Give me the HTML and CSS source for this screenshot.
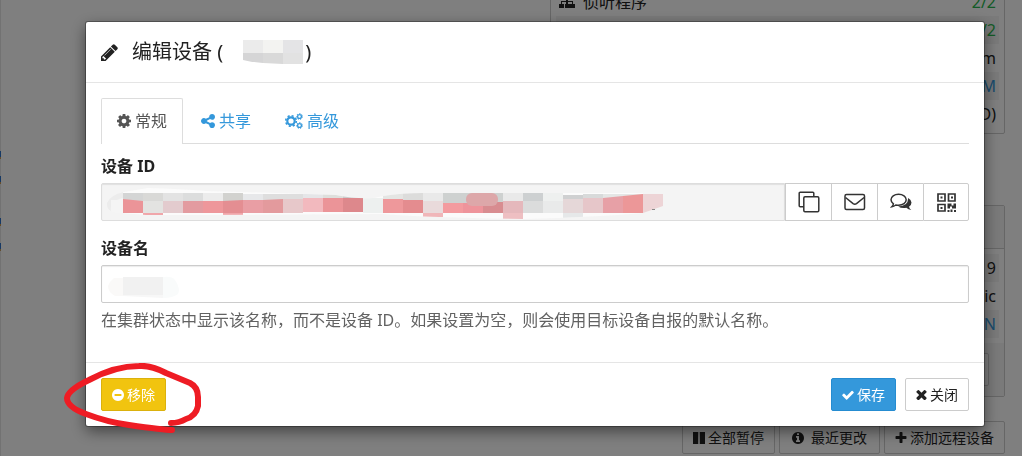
FILE: index.html
```html
<!DOCTYPE html>
<html lang="zh-CN">
<head>
  <meta charset="UTF-8">
  <meta name="viewport" content="width=device-width, initial-scale=1.0">
  <title>编辑设备</title>
  <link rel="stylesheet" href="styles.css">
</head>
<body>

<svg class="defs" aria-hidden="true">
  <symbol id="cog" viewBox="0 0 1792 1792"><path d="M1152 896q0-106-75-181t-181-75-181 75-75 181 75 181 181 75 181-75 75-181zm512-109v222q0 12-8 23t-20 13l-185 28q-19 54-39 91 35 50 107 138 10 12 10 25t-9 23q-27 37-99 108t-94 71q-12 0-26-9l-138-108q-44 23-91 38-16 136-29 186-7 28-36 28h-222q-14 0-24.5-8.5t-11.5-21.5l-28-184q-49-16-90-37l-141 107q-10 9-25 9-14 0-25-11-126-114-165-168-7-10-7-23 0-12 8-23 15-21 51-66.5t54-70.5q-27-50-41-99l-183-27q-13-2-21-12.5t-8-23.5v-222q0-12 8-23t19-13l186-28q14-46 39-92-40-57-107-138-10-12-10-24 0-10 9-23 26-36 98.5-107.5t94.5-71.5q13 0 26 10l138 107q44-23 91-38 16-136 29-186 7-28 36-28h222q14 0 24.5 8.5t11.5 21.5l28 184q49 16 90 37l142-107q9-9 24-9 13 0 25 10 129 119 165 170 7 8 7 22 0 12-8 23-15 21-51 66.5t-54 70.5q26 50 41 98l183 28q13 2 21 12.5t8 23.5z"/></symbol>
</svg>

<main class="page">
  <div class="folders">
    <svg width="1" height="100" viewBox="0 0 1 100" shape-rendering="crispEdges"><path fill="#2f73c8" d="M0 0h1v6H0zM0 25h1v6H0zM0 67h1v6H0zM0 92h1v6H0z"/><path fill="#c79a5a" d="M0 6h1v2H0zM0 31h1v2H0zM0 73h1v2H0zM0 98h1v2H0z"/></svg>
  </div>
  <div class="devices">
    <section class="panel">
      <div class="panel-body">
        <div class="row">
          <span><svg class="icon" viewBox="0 0 16 16"><path d="M6 1h4v4H9v2h5v3h2v4h-5v-4h2V8H9v2h2v4H6v-4h1V8H3v2h2v4H0v-4h2V7h5V5H6z"/></svg>侦听程序</span>
          <span class="good">2/2</span>
        </div>
        <div class="row">
          <span><svg class="icon" viewBox="0 0 16 16"><path d="M8 0l5 5v7H3V5z"/></svg></span>
          <span class="good">2/2</span>
        </div>
        <div class="row"><span></span><span>m</span></div>
        <div class="row"><span></span><a href="#">M</a></div>
        <div class="row"><span></span><span>D)</span></div>
      </div>
    </section>

    <section class="panel remote">
      <div class="panel-heading"></div>
      <div class="panel-body">
        <div class="row"><span></span><span>19</span></div>
        <div class="row"><span></span><span>ic</span></div>
        <div class="row"><span></span><a href="#">TN</a></div>
      </div>
      <div class="panel-footer"><button class="btn" type="button" aria-label="详情"></button></div>
    </section>

    <div class="actions">
      <button class="btn" type="button"><svg class="icon" viewBox="128 128 1536 1536"><path d="M128 128h672v1536H128zM992 128h672v1536H992z"/></svg>全部暂停</button>
      <button class="btn spaced" type="button"><svg class="icon" viewBox="128 128 1536 1536"><path d="M1152 1376v-160q0-14-9-23t-23-9h-96v-512q0-14-9-23t-23-9h-320q-14 0-23 9t-9 23v160q0 14 9 23t23 9h96v320h-96q-14 0-23 9t-9 23v160q0 14 9 23t23 9h448q14 0 23-9t9-23zm-128-896v-160q0-14-9-23t-23-9h-192q-14 0-23 9t-9 23v160q0 14 9 23t23 9h192q14 0 23-9t9-23zm640 416q0 209-103 385.5t-279.5 279.5-385.5 103-385.5-103-279.5-279.5-103-385.5 103-385.5 279.5-279.5 385.5-103 385.5 103 279.5 279.5 103 385.5z"/></svg>最近更改</button>
      <button class="btn" type="button"><svg class="icon" viewBox="128 128 1536 1536"><path d="M1600 736v192q0 40-28 68t-68 28h-416v416q0 40-28 68t-68 28h-192q-40 0-68-28t-28-68v-416h-416q-40 0-68-28t-28-68v-192q0-40 28-68t68-28h416v-416q0-40 28-68t68-28h192q40 0 68 28t28 68v416h416q40 0 68 28t28 68z"/></svg>添加远程设备</button>
    </div>
  </div>
</main>

<div class="modal">
  <form class="modal-content" role="dialog" aria-labelledby="title">
    <div class="modal-header">
      <svg class="icon" viewBox="128 128 1536 1536"><path d="M491 1536l91-91-235-235-91 91v107h128v128h107zm523-928q0-22-22-22-10 0-17 7l-542 542q-7 7-7 17 0 22 22 22 10 0 17-7l542-542q7-7 7-17zm-54-192l416 416-832 832h-416v-416zm683 96q0 53-37 90l-166 166-416-416 166-165q36-38 90-38 53 0 91 38l235 234q37 39 37 91z"/></svg>
      <h4 id="title">编辑设备 (
        <svg class="title-mask" viewBox="0 0 60 24">
          <path fill="#ebebeb" d="M0 0h20v13H0z"/><path fill="#f3f3f1" d="M20 0h20v13H20z"/><path fill="#e4e4e6" d="M40 0h20v13H40z"/>
          <path fill="#d5d5d6" d="M0 13h20v10Q7 22 0 20z"/><path fill="#d9d9d9" d="M20 13h20v11l-20-1z"/><path fill="#e2e2e2" d="M40 13h20v11H40z"/>
        </svg>)</h4>
    </div>

    <div class="modal-body">
      <ul class="tabs">
        <li class="active"><a href="#general"><svg class="icon" viewBox="128 128 1536 1536"><use href="#cog" width="1792" height="1792"/></svg>常规</a></li>
        <li><a href="#sharing"><svg class="icon" viewBox="128 128 1536 1536"><path d="M1344 1024q133 0 226.5 93.5t93.5 226.5-93.5 226.5-226.5 93.5-226.5-93.5-93.5-226.5q0-12 2-34l-360-180q-92 86-218 86-133 0-226.5-93.5t-93.5-226.5 93.5-226.5 226.5-93.5q126 0 218 86l360-180q-2-22-2-34 0-133 93.5-226.5t226.5-93.5 226.5 93.5 93.5 226.5-93.5 226.5-226.5 93.5q-126 0-218-86l-360 180q2 22 2 34t-2 34l360 180q92-86 218-86z"/></svg>共享</a></li>
        <li><a href="#advanced"><svg class="icon cogs" viewBox="0 0 18 16">
          <g fill="none" stroke="currentColor">
            <circle cx="6" cy="8" r="3.7" stroke-width="2.2"/><circle cx="6" cy="8" r="5.3" stroke-width="1.6" stroke-dasharray="2.1 2.06"/>
            <circle cx="14.5" cy="3.5" r="1.9" stroke-width="1.3"/><circle cx="14.5" cy="3.5" r="2.9" stroke-width="1" stroke-dasharray="1.3 1.3"/>
            <circle cx="14.5" cy="12.5" r="1.9" stroke-width="1.3"/><circle cx="14.5" cy="12.5" r="2.9" stroke-width="1" stroke-dasharray="1.3 1.3"/>
          </g></svg>高级</a></li>
      </ul>

      <div class="form-group">
        <label for="deviceID">设备 ID</label>
        <div class="input-group">
          <div class="field">
            <input id="deviceID" type="text" readonly>
            <svg class="mask" width="560" height="34" viewBox="0 0 560 34">
              <clipPath id="blob"><path d="M1 17Q4 9 18 6L42 2Q75 3 100 5L170 7 230 9Q260 15 277 10 295 7 317 7H557V20L537 27Q490 31 417 33 330 32 277 28L80 29 40 29 15 27Q0 27 1 17z"/></clipPath>
              <g clip-path="url(#blob)">
                <path fill="#fbfbfb" d="M17 0h520v34H17z"/>
                <path fill="#ececec" d="M0 5h17v7Q3 15 5 25H0z"/>
                <path fill="#f5f5f5" d="M5 14h12v14H5z"/>
                <path fill="#d4d5d5" d="M17 7h20v8H17z"/><path fill="#d9d9d7" d="M37 7h20v8H37z"/><path fill="#e3e3e3" d="M57 7h20v8H57z"/><path fill="#dcdddd" d="M77 7h20v8H77z"/><path fill="#ececec" d="M97 7h20v8H97z"/><path fill="#d2d2cf" d="M117 7h20v8h-20z"/><path fill="#e7e8ea" d="M137 8h20v7h-20z"/><path fill="#dedede" d="M157 8h40v7h-40z"/><path fill="#e5e6e8" d="M197 8h20v5h-20z"/><path fill="#dedfdc" d="M217 8h20v5h-20z"/><path fill="#ccc" d="M237 8h20v5h-20z"/>
                <path fill="#edf0ef" d="M257 12h20v15h-20z"/><path fill="#e4e5e3" d="M277 7h20v6h-20z"/><path fill="#dcdcdb" d="M297 7h20v8h-20z"/><path fill="#e9e9e9" d="M317 7h20v8h-20z"/><path fill="#ced1d0" d="M337 7h60v10h-60z"/><path fill="#e9e9e9" d="M397 7h20v8h-20z"/><path fill="#cdd0d1" d="M417 7h20v8h-20z"/><path fill="#eef0ef" d="M437 7h20v8h-20z"/><path fill="#cfd0d1" d="M457 9h20v4h-20z"/><path fill="#d8dada" d="M477 8h20v5h-20z"/><path fill="#e4e6e5" d="M497 8h40v4h-40z"/>
                <path fill="#eb9498" d="M17 13l20 2v12H17z"/><path fill="#e3e3e1" d="M37 15h20v12H37z"/><path fill="#e3cbce" d="M57 15h20v12H57z"/><path fill="#e39ba0" d="M77 15h20v12H77z"/><path fill="#ee979b" d="M97 15h20v12H97z"/><path fill="#e48e92" d="M117 15l20-1v14h-20z"/><path fill="#e99ea4" d="M137 14h20v13h-20z"/><path fill="#e39a9d" d="M157 14l20-1v14h-20z"/><path fill="#e7c8ca" d="M177 13h20v14h-20z"/><path fill="#f2b9be" d="M197 12h20v14h-20z"/><path fill="#eb9498" d="M217 12h20v14h-20z"/><path fill="#dd888c" d="M237 12h20v14h-20z"/>
                <path fill="#ee989b" d="M277 13h20v14h-20z"/><path fill="#e48c8f" d="M297 14h20v13h-20z"/><path fill="#e9dadb" d="M317 15h20v12h-20z"/><path fill="#f39b9f" d="M337 17h20v10h-20z"/><path fill="#ee949b" d="M357 17h20v10h-20z"/><path fill="#d88c90" d="M377 16h20v11h-20z"/><path fill="#e5b8bc" d="M397 15h20v12h-20z"/><path fill="#dbdcdc" d="M417 15h20v12h-20z"/><path fill="#e9eaea" d="M437 15h20v12h-20z"/><path fill="#e5d7d8" d="M457 13h20v14h-20z"/><path fill="#e6c6c9" d="M477 12h20v15h-20z"/><path fill="#e7a0a6" d="M497 12l20-2v17h-20z"/><path fill="#ec9798" d="M517 10l20-2v19h-20z"/><path fill="#edd4d6" d="M537 8h20v20h-20z"/>
                <path fill="#f0a6aa" d="M37 27h20v2H37zM117 27h20v2h-20z"/><path fill="#f0b6b9" d="M317 27h20v4h-20z"/><path fill="#eebfc2" d="M397 27h20v6h-20z"/><path fill="#e6e8e9" d="M457 27h20v6h-20z"/>
                <rect x="360" y="7" width="32" height="13" rx="6" fill="#dda7a9"/>
              </g>
              <path fill="#888" d="M546 23h3v1h-3z"/>
            </svg>
          </div>
          <button class="addon" type="button" aria-label="复制"><svg width="22" height="22" viewBox="0 0 22 22"><g fill="none" stroke="currentColor" stroke-width="1.5"><rect x="5.8" y="5.8" width="15" height="15" rx="1.2"/><path d="M5.8 15.8H2.2a1 1 0 0 1-1-1V2.2a1 1 0 0 1 1-1h12.6a1 1 0 0 1 1 1v3.6"/></g></svg></button>
          <button class="addon" type="button" aria-label="邮件"><svg width="22" height="18" viewBox="0 0 22 18"><g fill="none" stroke="currentColor" stroke-width="1.5"><rect x="1" y="1.5" width="19.5" height="15" rx="1.5"/><path d="M1.5 4.5l7.6 6.2q1.7 1.2 3.4 0l7.6-6.2"/></g></svg></button>
          <button class="addon" type="button" aria-label="短信"><svg width="22" height="18" viewBox="0 0 22 18"><path fill="none" stroke="currentColor" stroke-width="1.5" d="M8.6 1.3c4.3 0 7.6 2.4 7.6 5.5s-3.3 5.5-7.6 5.5q-1.5 0-2.8-.3-2 1.6-4 1.8 1.3-1.2 1.6-3Q1 9 1 6.8C1 3.7 4.3 1.3 8.6 1.3z"/><path fill="currentColor" d="M18.2 5Q21.5 7 21.5 9.6t-2.5 4.1q.4 1.9 2.3 3.2-3-.2-5-2.2-4.8.8-8.2-1.3Q18 13.500 18.200 5z"/></svg></button>
          <button class="addon last" type="button" aria-label="二维码"><svg width="19" height="19" viewBox="0 0 19 19"><g fill="none" stroke="currentColor" stroke-width="1.7"><path d="M1 1h7v7H1zM11.500 1h6.500v7h-6.500zM1 11.500h7v6.500H1z"/></g><path fill="currentColor" d="M3.500 3.500h2v2h-2zM14 3.500h2v2h-2zM3.500 14h2v2h-2zM10.500 10.500h4v2h2v-2H19v5h-4v-2h-2v2h-2.500zM10.500 17h2v2h-2zM13.500 16.500h2V19h-2zM17 17h2v2h-2z"/></svg></button>
        </div>
      </div>

      <div class="form-group">
        <label for="name">设备名</label>
        <div class="field">
          <input id="name" type="text">
          <svg class="mask" width="76" height="34" viewBox="0 0 76 34"><path fill="#faf9f8" d="M17 10v18H9Q2 24 2 18q2-5 6-8z"/><path fill="#f1f1f1" d="M17 9h40v18H17z"/><path fill="#f7f7f7" d="M17 27h40v3L17 28z"/><path fill="#f9fbfb" d="M57 9q9-1 12 3 6 9 3 14-5 4-15 4z"/></svg>
        </div>
        <p class="help">在集群状态中显示该名称，而不是设备 ID。如果设置为空，则会使用目标设备自报的默认名称。</p>
      </div>
    </div>

    <div class="modal-footer">
      <button class="btn warning" type="button"><svg class="icon" viewBox="128 128 1536 1536"><path d="M1344 960v-128q0-26-19-45t-45-19h-768q-26 0-45 19t-19 45v128q0 26 19 45t45 19h768q26 0 45-19t19-45zm320-64q0 209-103 385.5t-279.5 279.5-385.5 103-385.5-103-279.5-279.5-103-385.5 103-385.5 279.5-279.5 385.5-103 385.5 103 279.5 279.5 103 385.5z"/></svg>移除</button>
      <div class="footer-right">
        <button class="btn primary" type="submit"><svg class="icon" viewBox="96 96 1600 1600"><path d="M1671 566q0 40-28 68l-724 724-136 136q-28 28-68 28t-68-28l-136-136-362-362q-28-28-28-68t28-68l136-136q28-28 68-28t68 28l294 295 656-657q28-28 68-28t68 28l136 136q28 28 28 68z"/></svg>保存</button>
        <button class="btn" type="button"><svg class="icon narrow" viewBox="256 256 1280 1280"><path d="M1490 1322q0 40-28 68l-136 136q-28 28-68 28t-68-28l-294-294-294 294q-28 28-68 28t-68-28l-136-136q-28-28-28-68t28-68l294-294-294-294q-28-28-28-68t28-68l136-136q28-28 68-28t68 28l294 294 294-294q28-28 68-28t68 28l136 136q28 28 28 68t-28 68l-294 294 294 294q28 28 28 68z"/></svg>关闭</button>
      </div>
      <svg class="marker" width="140" height="72" viewBox="0 0 140 72"><path d="M110 67Q102 67 67 62 45 59 24 51 5 44 5 35 6 27 27 17 53 3 77 3 89 2 104 10L128 20Q136 24 136 34V43Q134 53 124 56 117 60 109 60" fill="none" stroke="#ee1c24" stroke-width="6" stroke-linecap="round" stroke-linejoin="round"/></svg>
    </div>
  </form>
</div>

</body>
</html>
```
FILE: styles.css
```css
* {
  box-sizing: border-box;
}
body {
  margin: 0;
  background: #fff;
  color: #222;
  font-family: "Noto Sans", "Noto Sans CJK SC", sans-serif;
  font-size: 16px;
  line-height: 24px;
  overflow: hidden;
}
a {
  color: #3498db;
  text-decoration: none;
}
button, input {
  font: inherit;
  color: inherit;
}
svg {
  flex: none;
}
.defs {
  display: none;
}
.icon {
  width: 14px;
  height: 14px;
  fill: currentColor;
}

/* page behind the dialog */
.page {
  display: grid;
  grid-template-columns: 1fr 455px;
  height: 100vh;
  padding-right: 17px;
  overflow: hidden;
}
.folders {
  padding-top: 151px;
  background: linear-gradient(to right, #e4e4e4 1px, transparent 1px);
}
.folders svg {
  display: block;
}
.panel {
  border: 1px solid #ccc;
  border-radius: 2px;
}
.panel:first-child {
  margin-top: -20px;
}
.panel-body {
  padding: 7px 5px 5px;
}
.row {
  display: flex;
  justify-content: space-between;
  height: 28px;
  padding: 2px 3px;
}
.row:nth-child(even) {
  background: #f4f4f4;
}
.row .icon {
  width: 16px;
  height: 16px;
  margin-right: 8px;
  vertical-align: -2px;
}
.row .good {
  color: #29b74e;
}
.remote {
  margin-top: 71px;
}
.remote .panel-heading {
  height: 43px;
  background: #f5f5f5;
  border-bottom: 1px solid #ccc;
}
.remote .row:nth-child(odd) {
  background: #f4f4f4;
}
.remote .row:nth-child(even) {
  background: none;
}
.remote .panel-body {
  padding: 5px;
}
.panel-footer {
  display: flex;
  justify-content: flex-end;
  padding: 10px 15px;
  background: #f5f5f5;
}
.panel-footer .btn {
  width: 80px;
  height: 33px;
}
.actions {
  display: flex;
  justify-content: flex-end;
  gap: 4px;
  margin-top: 24px;
}
.btn {
  display: flex;
  align-items: center;
  gap: 3px;
  padding: 5px 10px;
  border: 1px solid #ccc;
  border-radius: 2px;
  background: #fff;
  font-size: 14px;
  line-height: 21px;
  white-space: nowrap;
  cursor: pointer;
}
.btn .icon {
  width: 12px;
  height: 12px;
}
.btn.spaced {
  gap: 7px;
  padding: 5px 12px;
}
.btn .narrow {
  width: 11px;
  height: 11px;
}

/* dialog */
.modal {
  position: fixed;
  inset: 0;
  padding: 22px 38px 0 86px;
  background: rgba(0, 0, 0, 0.5);
}
.modal-content {
  background: #fff;
  border-radius: 2px;
  box-shadow: 0 0 0 1px rgba(0, 0, 0, 0.3), 0 5px 15px rgba(0, 0, 0, 0.5);
}
.modal-header {
  display: flex;
  align-items: center;
  gap: 14px;
  height: 61px;
  padding: 0 15px;
  border-bottom: 1px solid #e5e5e5;
}
.modal-header .icon {
  width: 17px;
  height: 17px;
}
.modal-header h4 {
  display: flex;
  align-items: center;
  margin: 0;
  font-size: 20px;
  font-weight: normal;
}
.title-mask {
  width: 60px;
  height: 24px;
  margin: 0 2px 0 20px;
}
.modal-body {
  padding: 15px;
}
.tabs {
  display: flex;
  gap: 2px;
  margin: 0 0 10px;
  padding: 0;
  list-style: none;
  border-bottom: 1px solid #ddd;
}
.tabs a {
  display: flex;
  align-items: center;
  gap: 4px;
  padding: 10px 15px;
  border: 1px solid transparent;
  border-bottom: 0;
  border-radius: 2px 2px 0 0;
}
.tabs .active a {
  margin-bottom: -1px;
  padding-bottom: 11px;
  border-color: #ddd;
  background: #fff;
  color: #555;
}
.tabs .cogs {
  width: 18px;
  height: 16px;
}
.form-group {
  margin-bottom: 15px;
}
label {
  display: block;
  margin-bottom: 5px;
  font-weight: bold;
}
.input-group {
  display: flex;
}
.field {
  position: relative;
  flex: 1;
}
.field input {
  display: block;
  width: 100%;
  height: 38px;
  padding: 6px 12px;
  border: 1px solid #ccc;
  border-radius: 2px;
  background: #fff;
  box-shadow: inset 0 1px 1px rgba(0, 0, 0, 0.08);
}
.field input[readonly] {
  border-color: #ddd;
  border-radius: 2px 0 0 2px;
  background: #f4f4f4;
}
.mask {
  position: absolute;
  left: 5px;
  top: 3px;
}
.addon {
  display: flex;
  align-items: center;
  justify-content: center;
  width: 46px;
  height: 38px;
  padding: 0;
  border: 1px solid #ccc;
  border-right: 0;
  background: #fff;
  color: #333;
}
.addon.last {
  border-right: 1px solid #ccc;
  border-radius: 0 2px 2px 0;
}
.help {
  margin: 5px 0 0;
  color: #626262;
}
.modal-footer {
  position: relative;
  display: flex;
  justify-content: space-between;
  padding: 15px;
  border-top: 1px solid #e5e5e5;
}
.footer-right {
  display: flex;
  gap: 9px;
}
.btn.warning {
  border-color: #dbb10d;
  background: #f1c40f;
  color: #fff;
}
.btn.primary {
  border-color: #258cd1;
  background: #3498db;
  color: #fff;
}

/* red pen ring round the remove button */
.marker {
  position: absolute;
  left: -24px;
  top: 0;
  pointer-events: none;
}
```
